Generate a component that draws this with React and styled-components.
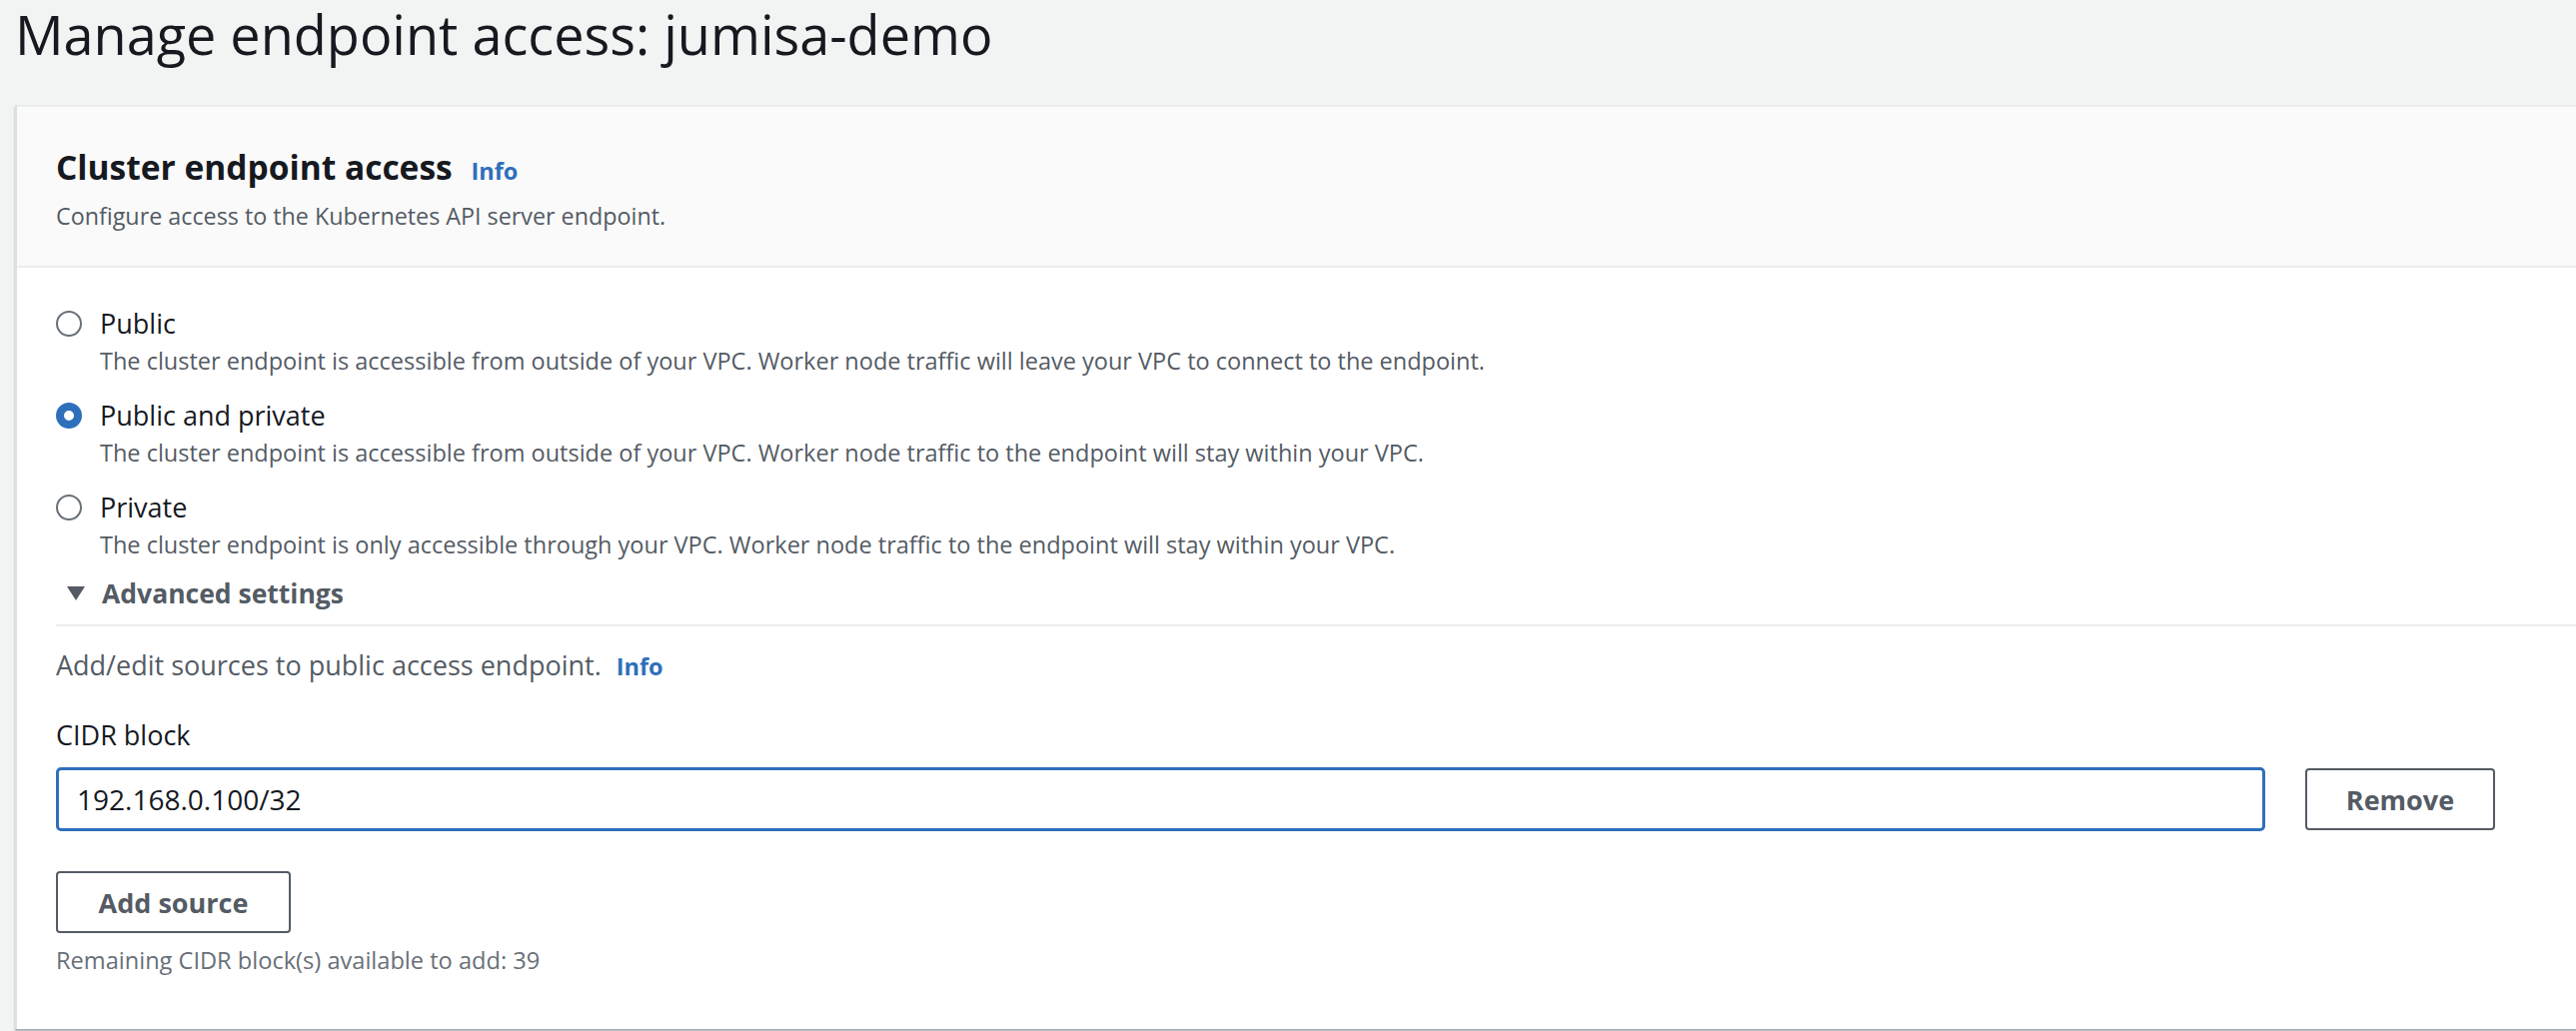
import styled, { createGlobalStyle } from 'styled-components';

const GlobalStyle = createGlobalStyle`
  body {
    margin: 0;
    background: #f2f3f3;
    font-family: "Open Sans", "Noto Sans", sans-serif;
    color: #16191f;
  }
`;

const options = [
  {
    id: 'public',
    label: 'Public',
    text: 'The cluster endpoint is accessible from outside of your VPC. Worker node traffic will leave your VPC to connect to the endpoint.',
  },
  {
    id: 'both',
    label: 'Public and private',
    text: 'The cluster endpoint is accessible from outside of your VPC. Worker node traffic to the endpoint will stay within your VPC.',
  },
  {
    id: 'private',
    label: 'Private',
    text: 'The cluster endpoint is only accessible through your VPC. Worker node traffic to the endpoint will stay within your VPC.',
  },
];

const App = () => {
  return (
    <Page>
      <GlobalStyle />
      <Title>Manage endpoint access: jumisa-demo</Title>
      <Panel>
        <Header>
          <HeaderTitle>
            Cluster endpoint access <InfoLink>Info</InfoLink>
          </HeaderTitle>
          <HeaderText>Configure access to the Kubernetes API server endpoint.</HeaderText>
        </Header>
        <Body>
          <RadioGroup>
            {options.map((o) => (
              <RadioRow key={o.id}>
                <Radio $checked={o.id === 'both'} />
                <div>
                  <RadioLabel>{o.label}</RadioLabel>
                  <RadioText>{o.text}</RadioText>
                </div>
              </RadioRow>
            ))}
          </RadioGroup>
          <Expander>
            <Caret />
            Advanced settings
          </Expander>
          <Divider />
          <Intro>
            Add/edit sources to public access endpoint. <InfoLink $small>Info</InfoLink>
          </Intro>
          <FieldLabel>CIDR block</FieldLabel>
          <FieldRow>
            <Input defaultValue="192.168.0.100/32" />
            <Button $wide>Remove</Button>
          </FieldRow>
          <Button>Add source</Button>
          <Hint>Remaining CIDR block(s) available to add: 39</Hint>
        </Body>
      </Panel>
    </Page>
  );
};

const Page = styled.div`
  height: 1032px;
  overflow: hidden;
  padding-left: 15px;
  box-sizing: border-box;
`;

const Title = styled.h1`
  margin: 0;
  height: 105px;
  font-size: 54px;
  font-weight: 400;
  line-height: 68px;
  color: #16191f;
`;

const Panel = styled.div`
  margin-right: -40px;
  background: #fff;
  border-left: 2px solid #dfe2e3;
  box-shadow: 0 2px 2px rgba(0, 28, 36, 0.35);
  height: 925px;
`;

const Header = styled.div`
  height: 163px;
  box-sizing: border-box;
  padding: 40px 39px 0;
  background: #fafafa;
  border-top: 2px solid #eaeded;
  border-bottom: 2px solid #eaeded;
`;

const HeaderTitle = styled.div`
  font-size: 33.5px;
  font-weight: 700;
  line-height: 40px;
`;

const InfoLink = styled.span`
  margin-left: ${(p) => (p.$small ? '8px' : '10px')};
  font-size: 23.5px;
  font-weight: 700;
  color: #2e6fbb;
`;

const HeaderText = styled.div`
  margin-top: 11px;
  font-size: 23.3px;
  line-height: 28px;
  color: #545b64;
`;

const Body = styled.div`
  padding: 38px 39px 0;
`;

const RadioGroup = styled.div`
  display: flex;
  flex-direction: column;
  gap: 18px;
`;

const RadioRow = styled.div`
  display: flex;
  gap: 18px;
`;

const Radio = styled.span`
  flex: none;
  width: 26px;
  height: 26px;
  margin-top: 5px;
  box-sizing: border-box;
  border-radius: 50%;
  border: ${(p) => (p.$checked ? '8px solid #2e6fbb' : '2px solid #687078')};
  background: #fff;
`;

const RadioLabel = styled.div`
  font-size: 27px;
  line-height: 36px;
`;

const RadioText = styled.div`
  font-size: 23.5px;
  line-height: 38px;
  color: #545b64;
`;

const Expander = styled.div`
  display: flex;
  align-items: center;
  gap: 17px;
  margin-top: 12px;
  padding-left: 11px;
  font-size: 26.5px;
  font-weight: 700;
  line-height: 36px;
  color: #545b64;
`;

const Caret = styled.span`
  width: 0;
  height: 0;
  border-left: 9px solid transparent;
  border-right: 9px solid transparent;
  border-top: 14px solid #545b64;
`;

const Divider = styled.div`
  height: 2px;
  background: #eaeded;
  margin: 13px -60px 0 0;
`;

const Intro = styled.div`
  margin-top: 22px;
  font-size: 27px;
  line-height: 34px;
  color: #545b64;
`;

const FieldLabel = styled.div`
  margin-top: 34px;
  font-size: 27px;
  line-height: 36px;
`;

const FieldRow = styled.div`
  display: flex;
  align-items: center;
  gap: 40px;
  margin-top: 14px;
  margin-bottom: 40px;
  padding-right: 82px;
`;

const Input = styled.input`
  flex: 1;
  height: 64px;
  box-sizing: border-box;
  padding: 0 18px;
  border: 3px solid #2e6fbb;
  border-radius: 5px;
  font-family: inherit;
  font-size: 28px;
  color: #16191f;
  outline: none;
`;

const Button = styled.button`
  display: block;
  width: ${(p) => (p.$wide ? '190px' : '235px')};
  height: 62px;
  flex: none;
  box-sizing: border-box;
  background: #fff;
  border: 2px solid #545b64;
  border-radius: 4px;
  font-family: inherit;
  font-size: 27px;
  font-weight: 700;
  color: #545b64;
  cursor: pointer;
`;

const Hint = styled.div`
  margin-top: 12px;
  font-size: 23.6px;
  line-height: 30px;
  color: #687078;
`;

export default App;
